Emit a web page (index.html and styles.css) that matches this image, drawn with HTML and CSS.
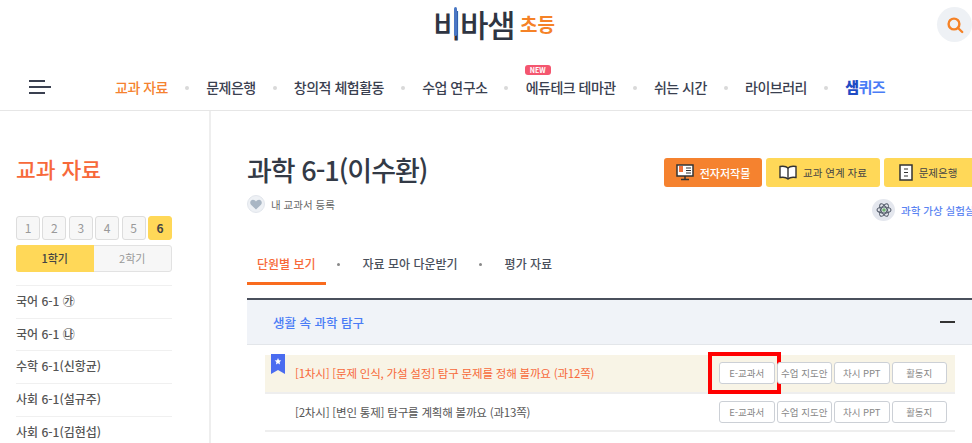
FILE: index.html
```html
<!DOCTYPE html>
<html lang="ko">
<head>
    <meta charset="UTF-8">
    <title>비바샘 초등</title>
    <link rel="stylesheet" href="styles.css">
</head>
<body>
    <header class="header">
        <div class="logo-row">
            <div class="logo">
                <span class="logo-main"><span class="logo-bi">비</span>바샘</span>
                <span class="logo-sub">초등</span>
            </div>
            <button class="search-btn">
                <svg width="18" height="18" viewBox="0 0 18 18" fill="none" stroke="#f58227" stroke-width="2.4">
                    <circle cx="8" cy="8" r="5.4"/>
                    <path d="M12 12l4.2 4" stroke-linecap="round"/>
                </svg>
            </button>
        </div>
        <nav class="gnb">
            <div class="menu-icon"><i></i><i></i><i></i></div>
            <ul class="gnb-list">
                <li class="on">교과 자료</li>
                <li>문제은행</li>
                <li>창의적 체험활동</li>
                <li>수업 연구소</li>
                <li class="has-new"><span class="new-badge">NEW</span>에듀테크 테마관</li>
                <li>쉬는 시간</li>
                <li>라이브러리</li>
                <li class="quiz"><b>샘</b>퀴즈</li>
            </ul>
        </nav>
    </header>

    <div class="wrap">
        <aside class="side">
            <h2 class="side-title">교과 자료</h2>
            <div class="grades">
                <span>1</span><span>2</span><span>3</span><span>4</span><span>5</span><span class="on">6</span>
            </div>
            <div class="terms">
                <span class="on">1학기</span><span>2학기</span>
            </div>
            <ul class="book-list">
                <li>국어 6-1 ㉮</li>
                <li>국어 6-1 ㉯</li>
                <li>수학 6-1(신항균)</li>
                <li>사회 6-1(설규주)</li>
                <li>사회 6-1(김현섭)</li>
            </ul>
        </aside>

        <main class="content">
            <div class="top">
                <div>
                    <h1 class="book-title">과학 6-1(이수환)</h1>
                    <div class="my-book">
                        <span class="heart">
                            <svg width="12" height="11" viewBox="0 0 12 11"><path d="M6 10.6L1 5.7C-.6 3.9.4.8 3 .8c1.300 0 2.300.7 3 1.800C6.700 1.500 7.700.8 9 .8c2.600 0 3.600 3.100 2 4.900z" fill="#a9b6c4"/></svg>
                        </span>
                        내 교과서 등록
                    </div>
                </div>
                <div class="top-right">
                    <div class="top-btns">
                        <a class="btn-orange">
                            <svg width="18" height="17" viewBox="0 0 18 17">
                                <rect x="1" y="1" width="16" height="11" fill="#fff" stroke="#333" stroke-width="1.500"/>
                                <rect x="3" y="2" width="4" height="6" fill="#f0703a"/>
                                <path d="M10 4h5M10 6.500h5M10 9h5" stroke="#333"/>
                                <path d="M9 12v3M5 15.500h8" stroke="#333" stroke-width="1.500"/>
                            </svg>
                            전자저작물
                        </a>
                        <a class="btn-yellow">
                            <svg width="18" height="15" viewBox="0 0 18 15" fill="#fff" stroke="#333" stroke-width="1.400">
                                <path d="M9 3C7.500 1.500 4 1 1 1.500V12.500C4 12 7.500 12.500 9 14C10.500 12.500 14 12 17 12.500V1.500C14 1 10.500 1.500 9 3Z"/>
                                <path d="M9 3V14"/>
                            </svg>
                            교과 연계 자료
                        </a>
                        <a class="btn-yellow btn-last">
                            <svg width="14" height="17" viewBox="0 0 14 17" fill="#fff" stroke="#333" stroke-width="1.500">
                                <path d="M1 1H13V16H1Z"/>
                                <path d="M5 5H9M5 8.500H9M5 12H9" stroke-width="1.200"/>
                            </svg>
                            문제은행
                        </a>
                    </div>
                    <div class="lab-link">
                        <span class="lab-icon">
                            <svg width="16" height="16" viewBox="0 0 16 16" fill="none" stroke="#555d6b" stroke-width="1.100">
                                <ellipse cx="8" cy="8" rx="7" ry="3"/>
                                <ellipse cx="8" cy="8" rx="7" ry="3" transform="rotate(60 8 8)"/>
                                <ellipse cx="8" cy="8" rx="7" ry="3" transform="rotate(120 8 8)"/>
                                <circle cx="8" cy="8" r="1.800" fill="#6fb36f" stroke="none"/>
                            </svg>
                        </span>
                        과학 가상 실험실
                    </div>
                </div>
            </div>

            <div class="tabs">
                <span class="tab on">단원별 보기</span>
                <span class="tab">자료 모아 다운받기</span>
                <span class="tab">평가 자료</span>
            </div>

            <section class="unit">
                <div class="unit-head">
                    <span>생활 속 과학 탐구</span>
                    <i class="minus"></i>
                </div>
                <ul class="lessons">
                    <li class="lesson current">
                        <svg class="bookmark" width="14" height="20" viewBox="0 0 14 20">
                            <path d="M0 0H14V20L7 16L0 20Z" fill="#4a6cf0"/>
                            <path d="M7 4l1 2.200 2.300.3-1.700 1.600.4 2.300-2-1.100-2 1.100.4-2.300-1.700-1.600 2.300-.3z" fill="#fff"/>
                        </svg>
                        <span class="lesson-name">[1차시] [문제 인식, 가설 설정] 탐구 문제를 정해 볼까요 (과12쪽)</span>
                        <div class="lesson-btns">
                            <a class="marked">E-교과서</a><a>수업 지도안</a><a>차시 PPT</a><a>활동지</a>
                        </div>
                    </li>
                    <li class="lesson">
                        <span class="lesson-name">[2차시] [변인 통제] 탐구를 계획해 볼까요 (과13쪽)</span>
                        <div class="lesson-btns">
                            <a>E-교과서</a><a>수업 지도안</a><a>차시 PPT</a><a>활동지</a>
                        </div>
                    </li>
                </ul>
            </section>
        </main>
    </div>
</body>
</html>
```
FILE: styles.css
```css
* {
    box-sizing: border-box;
}

html, body {
    height: 443px;
    overflow: hidden;
}

body {
    margin: 0;
    background-color: #fff;
    color: #333;
    font-family: "Noto Sans CJK KR", "Noto Sans", sans-serif;
}

ul {
    list-style: none;
    margin: 0;
    padding: 0;
}

/* header */
.header {
    height: 111px;
    border-bottom: 1px solid #e6e6e6;
}

.logo-row {
    position: relative;
    height: 63px;
    display: flex;
    justify-content: center;
}

.logo {
    display: flex;
    align-items: center;
    gap: 6px;
    height: 47px;
    padding-left: 16px;
}

.logo-main {
    font-size: 31px;
    font-weight: 500;
    letter-spacing: -1.5px;
    color: #2f3542;
}

.logo-bi {
    position: relative;
}

.logo-bi::after {
    content: "";
    position: absolute;
    left: 21px;
    top: 6px;
    width: 3px;
    height: 29px;
    border-radius: 2px;
    background-color: #4a78c4;
}

.logo-sub {
    font-size: 19px;
    font-weight: 700;
    color: #f58227;
}

.search-btn {
    position: absolute;
    right: 0;
    top: 7px;
    width: 35px;
    height: 35px;
    padding: 0;
    border: none;
    border-radius: 50%;
    background-color: #eef1f5;
    display: flex;
    align-items: center;
    justify-content: center;
}

.gnb {
    display: flex;
    align-items: center;
    height: 47px;
    padding-left: 29px;
}

.menu-icon {
    width: 22px;
    display: flex;
    flex-direction: column;
    gap: 4px;
    margin-right: 64px;
}

.menu-icon i {
    display: block;
    width: 16px;
    height: 2px;
    background-color: #3a4050;
}

.menu-icon i:nth-child(2) {
    width: 22px;
}

.gnb-list {
    display: flex;
    align-items: center;
    font-size: 14px;
    font-weight: 500;
    letter-spacing: -0.5px;
    color: #3a4050;
}

.gnb-list li {
    position: relative;
    white-space: nowrap;
    margin-right: 38.2px;
}

.gnb-list li::after {
    content: "";
    position: absolute;
    right: -21px;
    top: 9px;
    width: 4px;
    height: 4px;
    border-radius: 50%;
    background-color: #d9d9d9;
}

.gnb-list li:last-child::after {
    display: none;
}

.gnb-list .on {
    color: #f5822f;
}

.quiz {
    color: #4a7cf6;
    font-size: 15px;
    font-weight: 700;
}

.quiz b {
    color: #1f4bc4;
}

.new-badge {
    position: absolute;
    left: -1px;
    top: -12px;
    width: 26px;
    height: 10px;
    border-radius: 3px;
    background-color: #f4566f;
    color: #fff;
    font-size: 7px;
    font-weight: 700;
    line-height: 10px;
    text-align: center;
    letter-spacing: 0;
}

/* layout */
.wrap {
    display: flex;
    height: 332px;
}

.side {
    width: 211px;
    flex-shrink: 0;
    padding: 42px 38px 0 16px;
    border-right: 2px solid #eeeeee;
}

.side-title {
    margin: 0 0 31px;
    font-size: 21.5px;
    line-height: 32px;
    font-weight: 500;
    color: #f7693a;
}

.grades {
    display: flex;
    justify-content: space-between;
    width: 156px;
}

.grades span {
    width: 24px;
    height: 24px;
    border: 1px solid #ddd;
    border-radius: 3px;
    background-color: #f7f7f7;
    color: #999;
    font-size: 12px;
    line-height: 22px;
    text-align: center;
}

.grades .on {
    background-color: #ffd858;
    border-color: #ffd858;
    color: #444;
    font-weight: 700;
}

.terms {
    display: flex;
    width: 156px;
    height: 27px;
    margin-top: 5px;
    margin-bottom: 13px;
    border: 1px solid #e2e2e2;
    border-radius: 3px;
    background-color: #f7f7f7;
}

.terms span {
    flex: 1;
    font-size: 11px;
    line-height: 25px;
    text-align: center;
    color: #999;
}

.terms .on {
    margin: -1px 0 -1px -1px;
    line-height: 27px;
    border-radius: 3px 0 0 3px;
    background-color: #ffd858;
    color: #444;
    font-weight: 500;
}

.book-list {
    width: 156px;
    border-top: 1px solid #f0f0f0;
}

.book-list li {
    height: 32.7px;
    border-bottom: 1px solid #f0f0f0;
    font-size: 12px;
    font-weight: 500;
    line-height: 30px;
    color: #555;
    white-space: nowrap;
}

.content {
    flex: 1;
    min-width: 0;
    padding: 36px 0 0 36px;
}

.top {
    display: flex;
    justify-content: space-between;
    height: 106px;
}

.book-title {
    margin: 0;
    font-size: 27px;
    line-height: 46px;
    font-weight: 500;
    letter-spacing: -1px;
    color: #333a46;
}

.my-book {
    display: flex;
    align-items: center;
    gap: 6px;
    margin-top: 2px;
    font-size: 10.5px;
    color: #666;
}

.heart {
    width: 18px;
    height: 18px;
    border: 1px solid #e2e6ec;
    border-radius: 50%;
    background-color: #eef1f5;
    display: flex;
    align-items: center;
    justify-content: center;
}

.top-right {
    width: 308px;
    flex-shrink: 0;
    padding-top: 11px;
}

.top-btns {
    display: flex;
    gap: 4px;
    height: 29px;
}

.top-btns a {
    display: flex;
    align-items: center;
    justify-content: center;
    gap: 6px;
    height: 29px;
    border-radius: 3px;
    font-size: 10.5px;
    white-space: nowrap;
}

.top-btns .btn-orange {
    width: 98px;
    background-color: #f5822f;
    color: #fff;
    font-size: 11px;
    font-weight: 500;
}

.btn-yellow {
    width: 114px;
    background-color: #ffd858;
    color: #444;
}

.btn-last {
    width: 88px;
    border-radius: 3px 0 0 3px !important;
}

.lab-link {
    display: flex;
    align-items: center;
    gap: 6px;
    margin-top: 12px;
    margin-left: 208px;
    font-size: 10.5px;
    font-weight: 500;
    color: #5b84f2;
    white-space: nowrap;
}

.lab-icon {
    width: 23px;
    height: 22px;
    flex-shrink: 0;
    border-radius: 50%;
    background-color: #e4e7ee;
    display: flex;
    align-items: center;
    justify-content: center;
}

.tabs {
    display: flex;
    height: 32px;
    font-size: 12px;
    font-weight: 500;
    color: #4a505c;
}

.tab {
    position: relative;
    height: 32px;
    padding: 0 10px;
    margin-right: 27px;
    line-height: 22px;
    white-space: nowrap;
}

.tab::after {
    content: "";
    position: absolute;
    right: -14px;
    top: 10px;
    width: 3px;
    height: 3px;
    border-radius: 50%;
    background-color: #888;
}

.tab:last-child::after {
    display: none;
}

.tab.on {
    color: #f7693a;
    border-bottom: 3px solid #f96b1e;
}

.unit {
    margin-top: 13px;
    border-top: 2px solid #4a505c;
}

.unit-head {
    display: flex;
    align-items: center;
    justify-content: space-between;
    height: 45px;
    padding: 0 17px 0 26px;
    border-bottom: 1px solid #e3e6ea;
    background-color: #f0f3f8;
    font-size: 12.5px;
    font-weight: 500;
    color: #4a7cf6;
}

.minus {
    width: 15px;
    height: 2px;
    background-color: #333;
}

.lessons {
    margin: 0 17px 0 18px;
    padding-top: 10px;
}

.lesson {
    position: relative;
    display: flex;
    align-items: center;
    justify-content: space-between;
    height: 38.7px;
    padding: 0 8px 0 30px;
    font-size: 11.5px;
    letter-spacing: -0.2px;
    color: #555;
    border-bottom: 2px solid #eeeeee;
}

.lesson.current {
    background-color: #f8f4e6;
    color: #f7693a;
}

.bookmark {
    position: absolute;
    left: 6px;
    top: -1px;
}

.lesson-name {
    white-space: nowrap;
}

.lesson-btns {
    display: flex;
    gap: 2px;
    flex-shrink: 0;
}

.lesson-btns a {
    position: relative;
    width: 55.5px;
    height: 22px;
    border: 1px solid #ccd0d6;
    border-radius: 3px;
    background-color: #fff;
    color: #888;
    font-size: 9.5px;
    letter-spacing: 0;
    line-height: 20px;
    text-align: center;
    white-space: nowrap;
}

.marked::after {
    content: "";
    position: absolute;
    left: -12px;
    top: -11px;
    width: 65px;
    height: 34px;
    border: 4px solid #f00;
}
```
